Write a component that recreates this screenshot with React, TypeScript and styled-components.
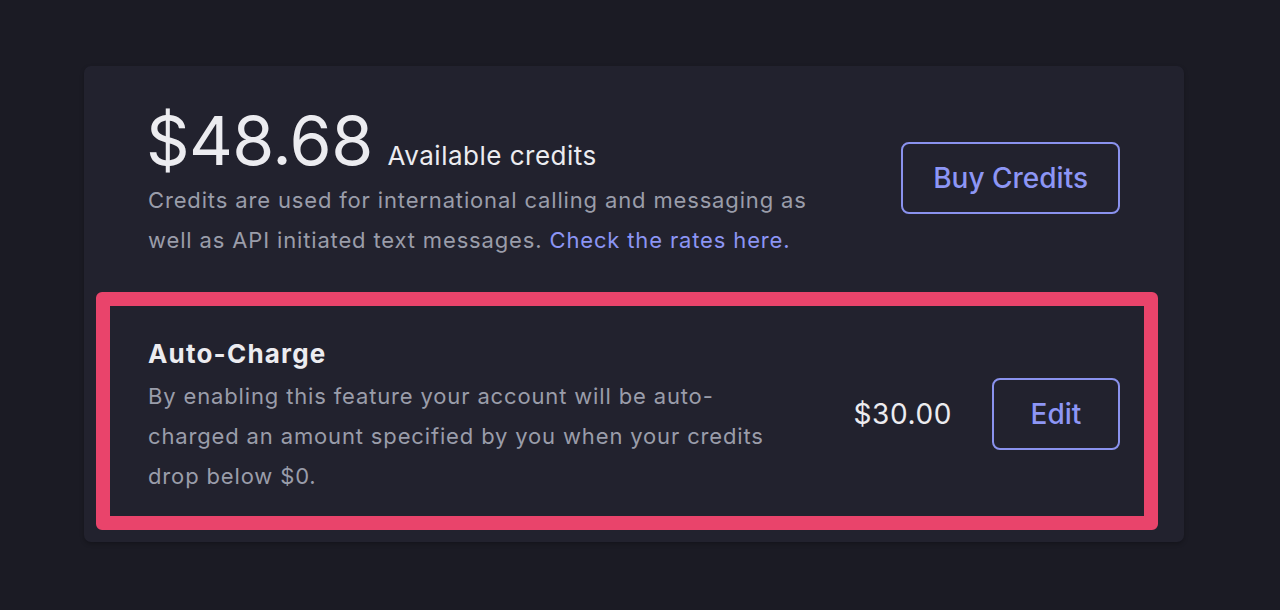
import React from "react";
import styled, { createGlobalStyle } from "styled-components";

const GlobalStyle = createGlobalStyle`
  html, body {
    margin: 0;
    padding: 0;
    background: #1b1b24;
    font-family: Inter, "Noto Sans", "Liberation Sans", sans-serif;
    -webkit-font-smoothing: antialiased;
  }
`;

const Page = styled.div`
  min-height: 610px;
  box-sizing: border-box;
  padding: 66px 96px 0 84px;
`;

const Card = styled.section`
  background: #22222e;
  border-radius: 7px;
  padding: 40px 0 12px 0;
  display: flex;
  flex-direction: column;
  box-shadow: 0 2px 4px rgba(0, 0, 0, 0.25);
`;

const TopSection = styled.div`
  display: flex;
  justify-content: space-between;
  align-items: flex-start;
  padding: 0 64px;
`;

const Info = styled.div`
  display: flex;
  flex-direction: column;
`;

const AmountRow = styled.div`
  display: flex;
  align-items: baseline;
  gap: 15px;
`;

const Amount = styled.span`
  font-size: 68px;
  line-height: 68px;
  font-weight: 400;
  color: #ececf0;
  letter-spacing: -0.6px;
  margin-left: -2px;
`;

const AmountLabel = styled.span`
  font-size: 26px;
  font-weight: 400;
  color: #ececf0;
  letter-spacing: 0.5px;
`;

const Description = styled.p<{ $width: number }>`
  margin: 6px 0 0 0;
  max-width: ${(p) => p.$width}px;
  font-size: 22px;
  line-height: 40px;
  color: #9a9daa;
  letter-spacing: 0.85px;
`;

const Link = styled.a`
  color: #8c95f4;
  text-decoration: none;
`;

const OutlineButton = styled.button<{ $minWidth: number; $offset?: number }>`
  box-sizing: border-box;
  height: 72px;
  min-width: ${(p) => p.$minWidth}px;
  padding: 0 30px;
  margin-top: ${(p) => p.$offset ?? 0}px;
  background: transparent;
  border: 2px solid #8a92ee;
  border-radius: 8px;
  color: #8d96f5;
  font-family: Inter, "Noto Sans", "Liberation Sans", sans-serif;
  font-size: 28px;
  font-weight: 500;
  cursor: pointer;
  flex-shrink: 0;
`;

const Highlight = styled.div`
  margin: 32px 26px 0 12px;
  border: 14px solid #e9446b;
  border-radius: 6px;
  padding: 32px 24px 20px 38px;
  display: flex;
  align-items: center;
  justify-content: space-between;
`;

const Title = styled.h3`
  margin: 0;
  font-size: 26px;
  line-height: 32px;
  font-weight: 700;
  color: #ececf0;
  letter-spacing: 1.2px;
`;

const Actions = styled.div`
  display: flex;
  align-items: center;
  gap: 40px;
  margin-bottom: 6px;
`;

const Price = styled.span`
  font-size: 28px;
  color: #ececf0;
  letter-spacing: 0.6px;
`;

export default function App() {
  return (
    <>
      <GlobalStyle />
      <Page>
        <Card>
          <TopSection>
            <Info>
              <AmountRow>
                <Amount>$48.68</Amount>
                <AmountLabel>Available credits</AmountLabel>
              </AmountRow>
              <Description $width={690}>
                Credits are used for international calling and messaging as well as API initiated
                text messages. <Link href="#">Check the rates here.</Link>
              </Description>
            </Info>
            <OutlineButton $minWidth={218} $offset={36}>
              Buy Credits
            </OutlineButton>
          </TopSection>
          <Highlight>
            <Info>
              <Title>Auto-Charge</Title>
              <Description $width={636}>
                By enabling this feature your account will be auto-charged an amount specified by
                you when your credits drop below $0.
              </Description>
            </Info>
            <Actions>
              <Price>$30.00</Price>
              <OutlineButton $minWidth={128}>Edit</OutlineButton>
            </Actions>
          </Highlight>
        </Card>
      </Page>
    </>
  );
}
